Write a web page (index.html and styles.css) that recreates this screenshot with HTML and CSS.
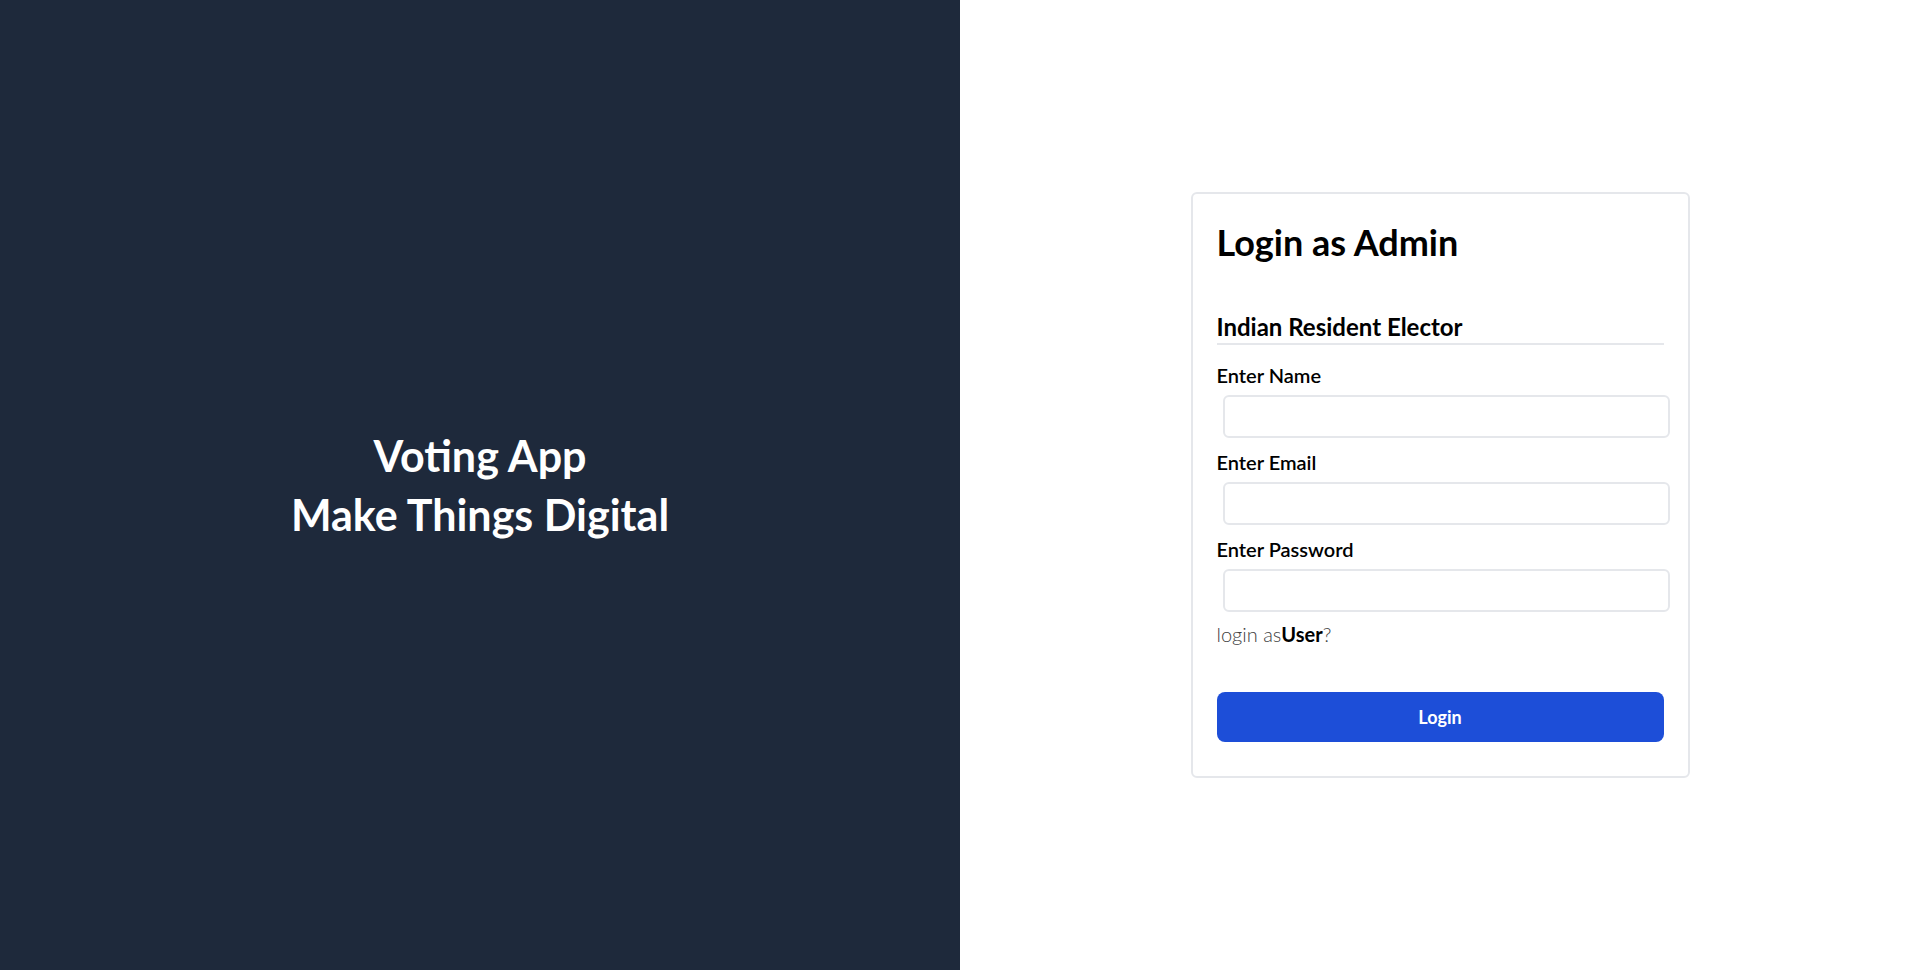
FILE: index.html
```html
<!DOCTYPE html>
<html lang="en">
<head>
<meta charset="utf-8">
<title>Voting App</title>
<link rel="stylesheet" href="styles.css">
</head>
<body>
<div class="page">
  <section class="hero">
    <h1 class="hero-title">Voting App<br>Make Things Digital</h1>
  </section>
  <section class="side">
    <form class="card">
      <h2 class="card-title">Login as Admin</h2>
      <h3 class="section-title">Indian Resident Elector</h3>
      <div class="fields">
        <label class="label" for="name">Enter Name</label>
        <input class="input" id="name" type="text">
        <label class="label" for="email">Enter Email</label>
        <input class="input" id="email" type="email">
        <label class="label" for="password">Enter Password</label>
        <input class="input" id="password" type="password">
      </div>
      <p class="switch">login as<b class="switch-strong">User</b>?</p>
      <button class="btn" type="button">Login</button>
    </form>
  </section>
</div>
</body>
</html>
```

FILE: styles.css
```css
* { box-sizing: border-box; }
html, body { margin: 0; padding: 0; }
body {
  font-family: Lato, "Noto Sans", "Liberation Sans", sans-serif;
  color: #000;
}
.page {
  display: flex;
  height: 100vh;
  width: 100%;
}
.hero {
  width: 50%;
  background: #1e293b;
  display: flex;
  align-items: center;
  justify-content: center;
}
.hero-title {
  margin: 0;
  color: #fff;
  font-size: 43px;
  font-weight: 700;
  line-height: 59px;
  text-align: center;
}
.side {
  width: 50%;
  background: #fff;
  display: flex;
  align-items: center;
  justify-content: center;
}
.card {
  width: 499px;
  border: 2px solid #e5e7eb;
  border-radius: 6px;
  padding: 28px 24px 34px;
  display: flex;
  flex-direction: column;
}
.card-title {
  margin: 0;
  font-size: 36px;
  font-weight: 700;
  line-height: 40px;
}
.section-title {
  margin: 49px 0 0;
  font-size: 24px;
  font-weight: 700;
  line-height: 32px;
  padding-bottom: 0;
  border-bottom: 2px solid #e5e7eb;
}
.fields {
  display: flex;
  flex-direction: column;
  margin-top: 12px;
}
.label {
  display: block;
  font-size: 20px;
  font-weight: 600;
  line-height: 28px;
  padding-top: 4px;
}
.input {
  display: block;
  width: 100%;
  height: 43px;
  margin: 6px 0 6px 6px;
  border: 2px solid #e5e7eb;
  border-radius: 6px;
  background: #fff;
  font: inherit;
}
.switch {
  margin: 2px 0 0;
  font-size: 20px;
  font-weight: 300;
  line-height: 28px;
  color: #404040;
}
.switch-strong {
  font-weight: 700;
  color: #000;
}
.btn {
  margin-top: 44px;
  height: 50px;
  width: 100%;
  border: 0;
  border-radius: 8px;
  background: #1d4ed8;
  color: #fff;
  font-family: inherit;
  font-size: 18px;
  font-weight: 700;
}
```
